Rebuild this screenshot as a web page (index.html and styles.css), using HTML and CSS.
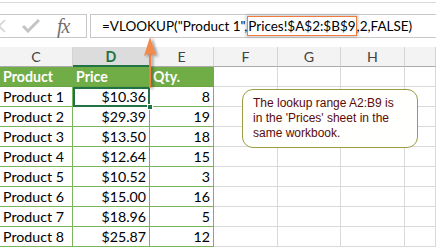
FILE: index.html
```html
<!DOCTYPE html>
<html lang="en">

<head>
  <meta charset="utf-8">
  <title>VLOOKUP from another sheet</title>
  <link rel="stylesheet" href="styles.css">
</head>

<body>
  <div class="screen">
    <div class="toolbar">
      <div class="fx-box">
        <svg class="cancel" width="8" height="14" viewBox="0 0 8 14">
          <path d="M-6 1 L6 13 M6 1 L-6 13" fill="none" stroke="#d4d4d4" stroke-width="1.6"/>
        </svg>
        <svg class="check" width="18" height="14" viewBox="0 0 18 14">
          <path d="M1 7 L6 12 L17 1" fill="none" stroke="#c4c4c4" stroke-width="3"/>
        </svg>
        <span class="fx">fx</span>
      </div>
      <div class="formula">=VLOOKUP("Product 1",<span class="ref">Prices!$A$2:$B$9</span>,2,FALSE)</div>
    </div>

    <div class="sheet">
      <div class="ch">C</div><div class="ch sel">D</div><div class="ch">E</div><div class="ch">F</div><div class="ch">G</div><div class="ch">H</div><div class="ch"></div>

      <div class="t head">Product</div><div class="t head">Price</div><div class="t head">Qty.</div><div class="g"></div><div class="g"></div><div class="g"></div><div class="g"></div>

      <div class="t">Product 1</div><div class="t num active">$10.36<i class="handle"></i></div><div class="t num">8</div><div class="g"></div><div class="g"></div><div class="g"></div><div class="g"></div>
      <div class="t">Product 2</div><div class="t num">$29.39</div><div class="t num">19</div><div class="g"></div><div class="g"></div><div class="g"></div><div class="g"></div>
      <div class="t">Product 3</div><div class="t num">$13.50</div><div class="t num">18</div><div class="g"></div><div class="g"></div><div class="g"></div><div class="g"></div>
      <div class="t">Product 4</div><div class="t num">$12.64</div><div class="t num">15</div><div class="g"></div><div class="g"></div><div class="g"></div><div class="g"></div>
      <div class="t">Product 5</div><div class="t num">$10.52</div><div class="t num">3</div><div class="g"></div><div class="g"></div><div class="g"></div><div class="g"></div>
      <div class="t">Product 6</div><div class="t num">$15.00</div><div class="t num">16</div><div class="g"></div><div class="g"></div><div class="g"></div><div class="g"></div>
      <div class="t">Product 7</div><div class="t num">$18.96</div><div class="t num">5</div><div class="g"></div><div class="g"></div><div class="g"></div><div class="g"></div>
      <div class="t">Product 8</div><div class="t num">$25.87</div><div class="t num">12</div><div class="g"></div><div class="g"></div><div class="g"></div><div class="g"></div>
    </div>

    <!-- pointer from the column to the formula argument -->
    <svg class="arrow" width="20" height="56" viewBox="0 0 20 56">
      <defs>
        <filter id="shade" x="-50%" y="-20%" width="200%" height="140%">
          <feDropShadow dx="2" dy="1" stdDeviation="1.5" flood-color="#000" flood-opacity="0.45"/>
        </filter>
      </defs>
      <g filter="url(#shade)">
        <path d="M9 16 L9 52" stroke="#f08040" stroke-width="2"/>
        <path d="M9 1 L15 20 L9 17 L3 20 Z" fill="#f5894a"/>
      </g>
    </svg>

    <div class="note">The lookup range A2:B9 is in the 'Prices' sheet in the same workbook.</div>
  </div>
</body>

</html>
```

FILE: styles.css
```css
* {
  box-sizing: border-box;
}

body {
  margin: 0;
  background: #fff;
  font-family: Lato, "Liberation Sans", sans-serif;
  color: #000;
}

.screen {
  position: relative;
  width: 436px;
  height: 247px;
  overflow: hidden;
}

.toolbar {
  display: flex;
  gap: 3px;
  height: 47px;
  padding-top: 12px;
  border-top: 2px solid #fff;
  box-shadow: inset 0 1px 0 #dadada;
}

.fx-box {
  display: flex;
  align-items: center;
  width: 89px;
  height: 24px;
  margin-left: -2px;
  border: 1px solid #c8c8c8;
}

.check {
  margin-left: 15px;
}

.fx {
  margin-left: 17px;
  font-family: "Liberation Serif", serif;
  font-style: italic;
  font-size: 20px;
  color: #6f6f6f;
  letter-spacing: -1px;
}

.formula {
  flex: 1;
  height: 24px;
  padding: 3px 0 0 11px;
  margin-right: -4px;
  border: 1px solid #c8c8c8;
  font-size: 13.5px;
  white-space: nowrap;
}

.ref {
  padding: 1px 0;
  border: 1px solid #f07b3c;
  box-shadow: 0 0 3px 1px rgba(0, 0, 0, .22);
}

.sheet {
  display: grid;
  grid-template-columns: 73px 77px 64px 64px 63px 64px 31px;
  grid-auto-rows: 20px;
  font-size: 14.2px;
}

.sheet > div {
  position: relative;
  padding: 0 3px;
  line-height: 19px;
  white-space: nowrap;
}

.ch {
  background: #f3f3f3;
  border-right: 1px solid #d4d4d4;
  border-bottom: 1px solid #ababab;
  text-align: center;
  color: #444;
}

.ch.sel {
  background: #dcdcdc;
  border-bottom: 2px solid #217346;
  color: #217346;
  font-weight: 700;
}

.t {
  border-right: 1px solid #7cb45a;
  border-bottom: 1px solid #7cb45a;
}

.head {
  background: #70ad47;
  color: #fff;
  font-weight: 700;
  border-color: #70ad47;
  border-bottom-color: #6aa542;
}

.num {
  text-align: right;
}

.active {
  outline: 2px solid #217346;
  outline-offset: -2px;
}

.handle {
  position: absolute;
  right: -4px;
  bottom: -4px;
  width: 6px;
  height: 6px;
  background: #217346;
  border: 1px solid #fff;
  z-index: 2;
}

.g {
  border-right: 1px solid #d9d9d9;
  border-bottom: 1px solid #d9d9d9;
}

.arrow {
  position: absolute;
  left: 141px;
  top: 36px;
}

.note {
  position: absolute;
  left: 242px;
  top: 89px;
  width: 176px;
  height: 59px;
  padding: 6px 18px 0 10px;
  background: #fffffd;
  border: 1px solid #9c9c44;
  border-radius: 11px;
  font-family: "Liberation Sans", Arial, sans-serif;
  font-size: 12px;
  line-height: 15px;
  color: #5a0a0a;
}
```
